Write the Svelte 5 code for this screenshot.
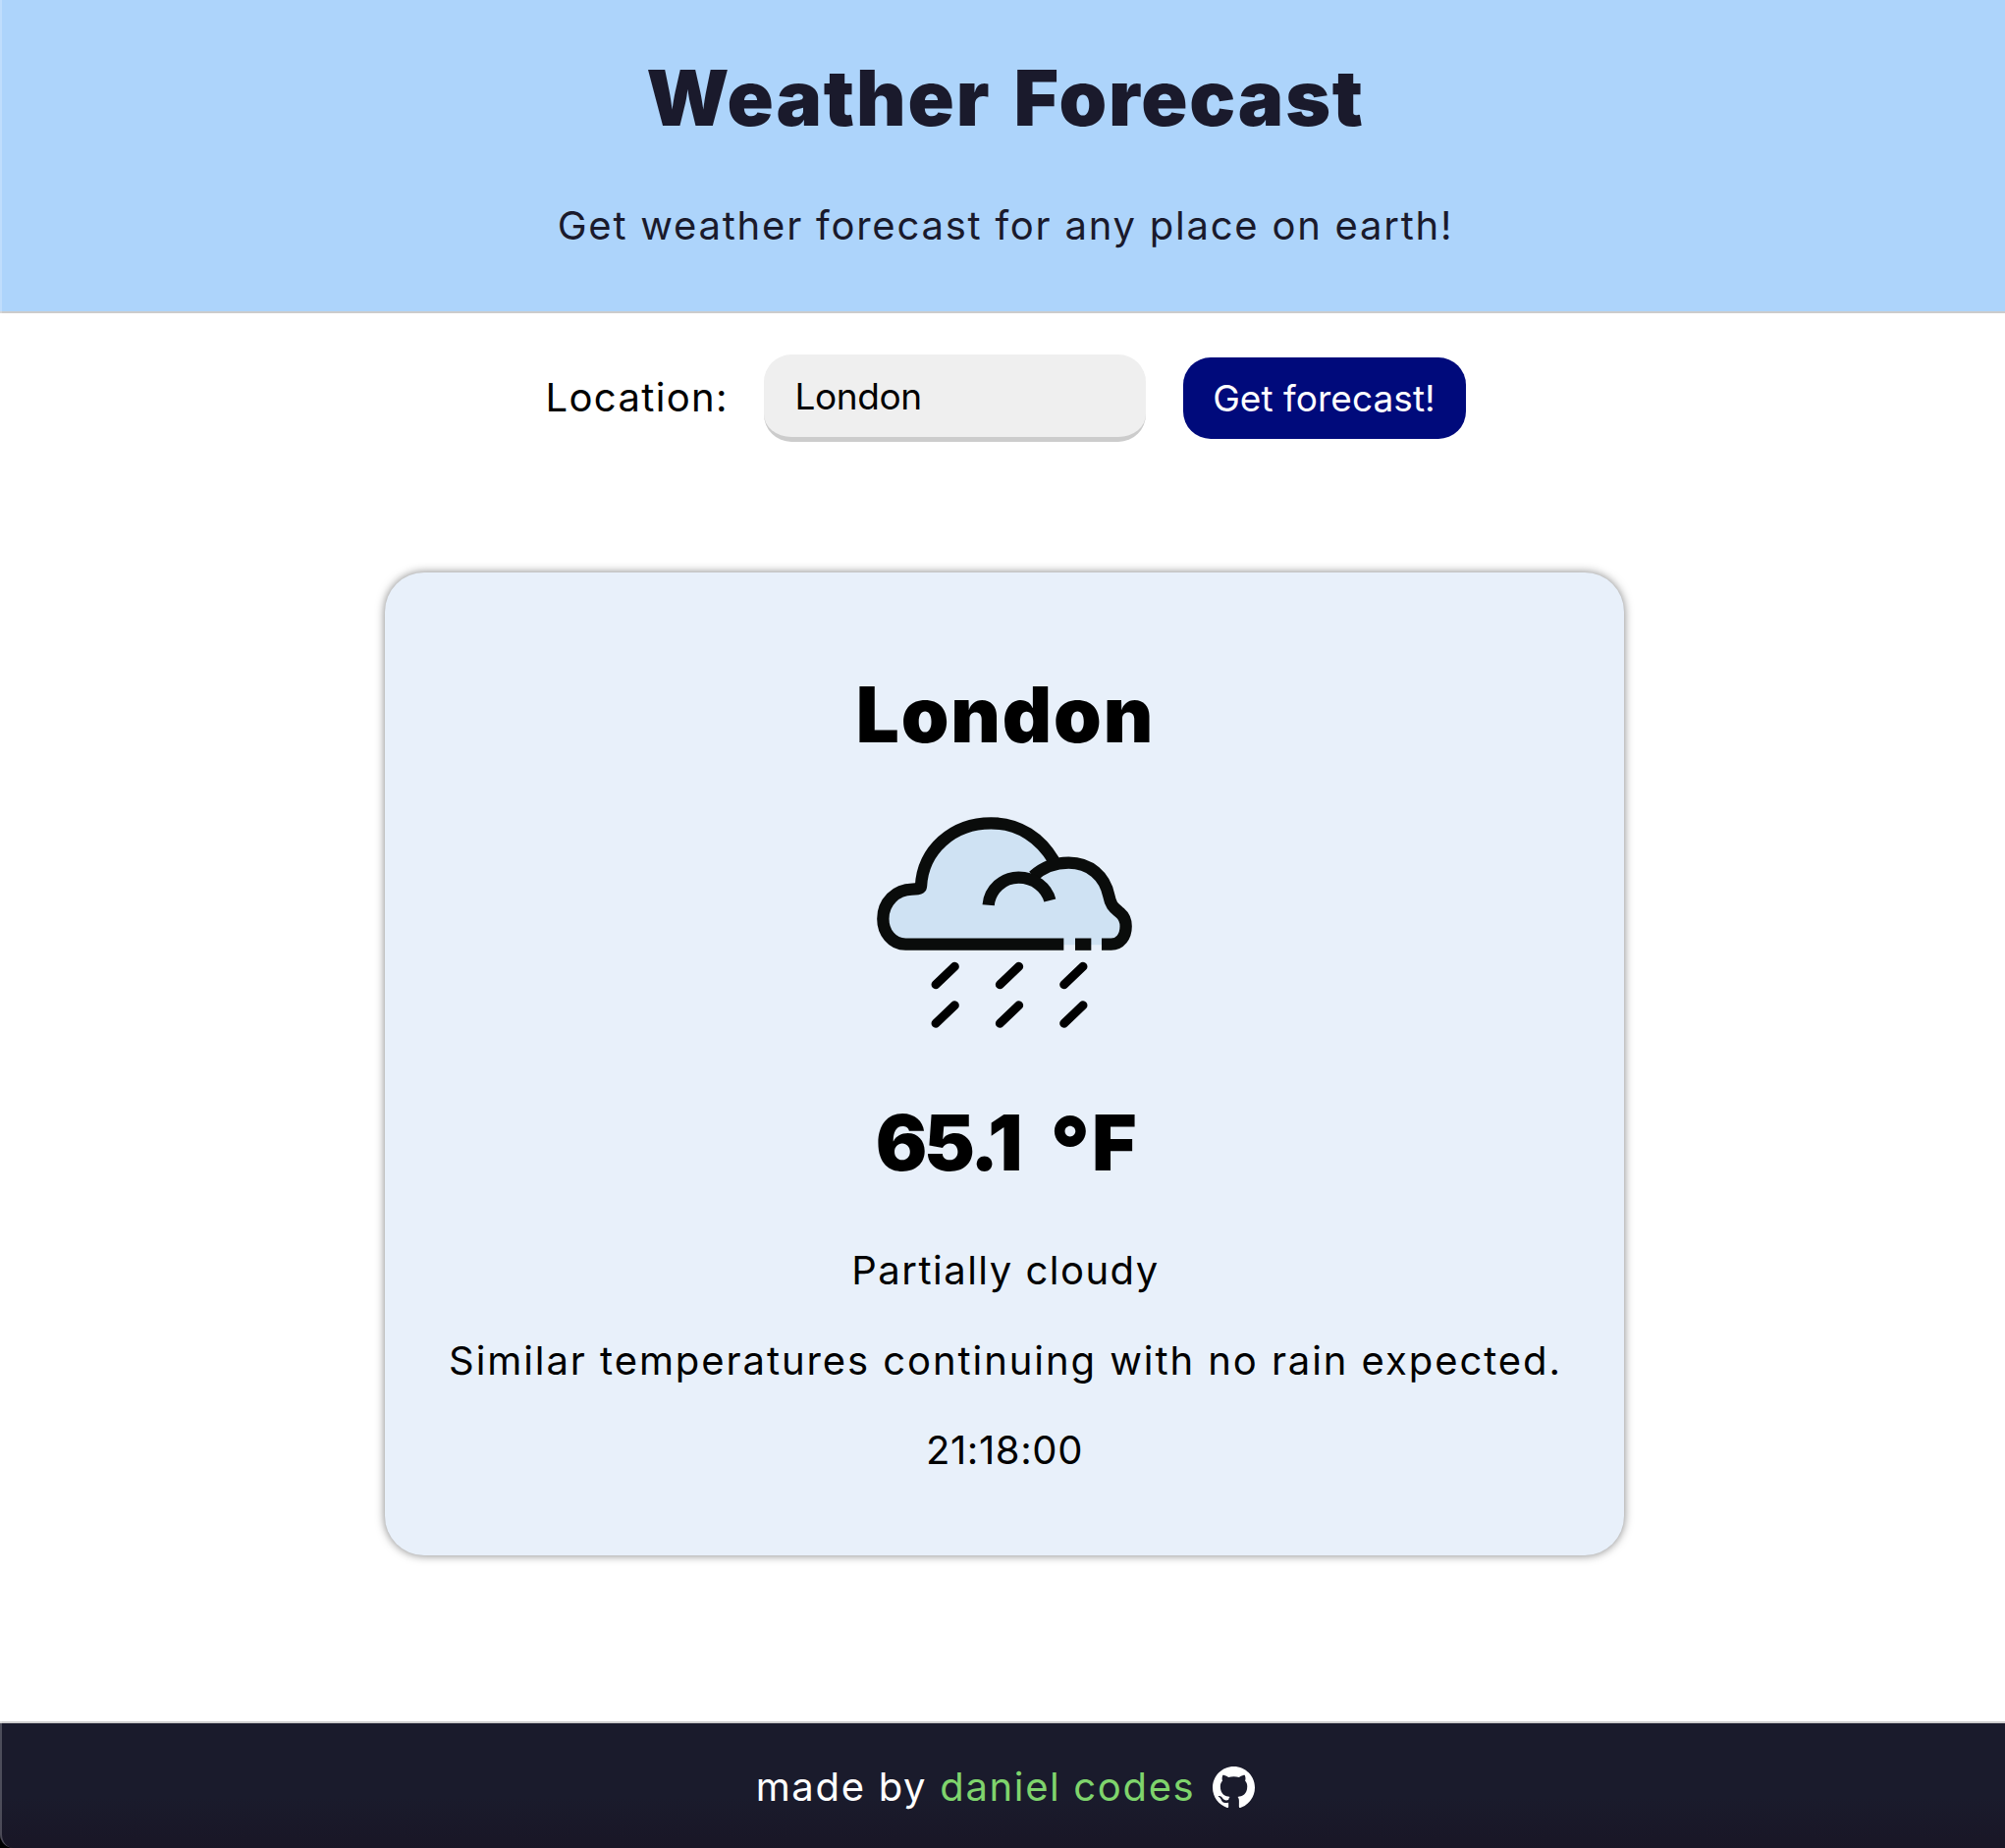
<script lang="ts">
  let location = $state('London');
  const forecast = {
    place: 'London',
    temperature: '65.1',
    conditions: 'Partially cloudy',
    description: 'Similar temperatures continuing with no rain expected.',
    time: '21:18:00'
  };
  const drops = [0, 1, 2].flatMap((col) => [0, 1].map((row) => ({ x: col * 196, y: row * 118.5 })));
</script>

<div class="page">
  <header>
    <h1>Weather Forecast</h1>
    <p>Get weather forecast for any place on earth!</p>
  </header>

  <main>
    <form onsubmit={(e) => e.preventDefault()}>
      <label for="location">Location:</label>
      <input id="location" type="text" bind:value={location} />
      <button type="submit">Get forecast!</button>
    </form>

    <section class="card">
      <h2 class="place">{forecast.place}</h2>
      <svg class="icon" viewBox="-6 0 930 780" aria-hidden="true">
        <path
          class="fill"
          d="M157 460C115 460 88 420 88 380C88 330 125 290 175 290Q205 290 205 275C212 170 300 88 418 88C505 88 570 135 608 209C720 200 770 250 780 315C786 345 795 347 812 362C825 373 830 388 830 403C830 435 812 460 785 460Z"
        />
        <g class="outline">
          <path d="M640 458H157C115 458 88 421 88 380C88 330 127 290 177 290Q204 290 204 280C210 170 300 88 418 88C505 88 570 135 610 203" />
          <path d="M547 250C575 224 610 209 655 209C720 209 766 250 778 310C784 342 795 347 812 362C825 373 830 388 830 403C830 435 812 458 785 458H756" />
          <path d="M410 338C414 290 455 254 502 254C550 254 588 285 598 324" />
          <path d="M675 458H724" />
        </g>
        <g class="rain">
          {#each drops as d}
            <path d="M249 581L307 526" transform="translate({d.x} {d.y})" />
          {/each}
        </g>
      </svg>
      <h2 class="temp">{forecast.temperature} <span class="degree">°</span>F</h2>
      <p class="conditions">{forecast.conditions}</p>
      <p class="description">{forecast.description}</p>
      <p class="time">{forecast.time}</p>
    </section>
  </main>

  <footer>
    <span class="made">made by</span>
    <a href="#daniel">daniel codes</a>
    <svg class="github" viewBox="0 0 16 16" aria-hidden="true">
      <path d="M8 0C3.58 0 0 3.58 0 8c0 3.54 2.29 6.53 5.47 7.59.4.07.55-.17.55-.38 0-.19-.01-.82-.01-1.49-2.01.37-2.53-.49-2.69-.94-.09-.23-.48-.94-.82-1.13-.28-.15-.68-.52-.01-.53.63-.01 1.08.58 1.23.82.72 1.21 1.87.87 2.33.66.07-.52.28-.87.51-1.07-1.78-.2-3.64-.89-3.64-3.95 0-.87.31-1.59.82-2.15-.08-.2-.36-1.02.08-2.12 0 0 .67-.21 2.2.82.64-.18 1.32-.27 2-.27s1.36.09 2 .27c1.53-1.04 2.2-.82 2.2-.82.44 1.1.16 1.92.08 2.12.51.56.82 1.27.82 2.15 0 3.07-1.87 3.75-3.65 3.95.29.25.54.73.54 1.48 0 1.07-.01 1.93-.01 2.2 0 .21.15.46.55.38A8.01 8.01 0 0 0 16 8c0-4.42-3.58-8-8-8z" />
    </svg>
  </footer>
  <div class="edge"></div>
</div>

<style>
  :global(body) {
    background: #fff;
  }
  .page {
    position: relative;
    box-sizing: border-box;
    height: 1882px;
    display: flex;
    flex-direction: column;
    overflow: hidden;
    font-family: Inter, 'Liberation Sans', sans-serif;
    font-size: 40px;
    line-height: 50px;
    color: #000;
  }
  h1,
  h2,
  p {
    margin: 0;
    white-space: nowrap;
  }
  h1,
  h2 {
    font-size: 78px;
    font-weight: 900;
    line-height: 100px;
  }
  header {
    box-sizing: border-box;
    height: 319px;
    padding: 50px 0 0 4px;
    display: flex;
    flex-direction: column;
    align-items: center;
    gap: 55px;
    background: #add4fb;
    border-bottom: 2px solid #ccc;
    color: #1a1a2c;
  }
  h1 {
    padding-left: 2px;
    letter-spacing: 1.8px;
    word-spacing: 6px;
  }
  header p {
    padding-left: 2px;
    letter-spacing: 1.77px;
  }
  main {
    flex: 1;
    padding-left: 4px;
    display: flex;
    flex-direction: column;
    align-items: center;
  }
  form {
    margin-top: 42px;
    height: 89px;
    display: flex;
    align-items: center;
    gap: 38px;
    padding-left: 2px;
  }
  label {
    width: 184px;
    margin-top: -2px;
    white-space: nowrap;
    letter-spacing: 1.35px;
  }
  input,
  button {
    box-sizing: border-box;
    border: 0;
    border-radius: 28px;
    font-family: inherit;
    font-size: 37px;
    line-height: 48px;
  }
  input {
    width: 389px;
    height: 89px;
    padding: 0 32px;
    background: #efefef;
    border-bottom: 5px solid #ccc;
    outline: none;
    color: #000;
    letter-spacing: -0.4px;
  }
  button {
    width: 288px;
    height: 83px;
    padding: 0;
    background: #000a7b;
    color: #fff;
    white-space: nowrap;
    letter-spacing: 0.05px;
  }
  .card {
    box-sizing: border-box;
    width: 1262px;
    height: 1001px;
    margin-top: 133px;
    padding-top: 95px;
    display: flex;
    flex-direction: column;
    align-items: center;
    background: #e8f0fa;
    border-radius: 40px;
    box-shadow: 0 0 10px rgba(0, 0, 0, 0.5);
  }
  .place {
    padding-left: 2px;
    letter-spacing: 1.9px;
  }
  .icon {
    width: 310px;
    height: 260px;
    margin-top: 31px;
  }
  .fill {
    fill: #cfe2f3;
  }
  .outline {
    fill: none;
    stroke: #0a0c0b;
    stroke-width: 37;
  }
  .rain {
    stroke: #000;
    stroke-width: 27;
    stroke-linecap: round;
  }
  .temp {
    margin-top: 45px;
    letter-spacing: -3.4px;
    word-spacing: 19px;
  }
  .degree {
    font-size: 88px;
    line-height: 0;
    letter-spacing: 2px;
    vertical-align: -8px;
  }
  .conditions {
    margin-top: 55px;
    padding-left: 2px;
    letter-spacing: 1.5px;
  }
  .description,
  .time {
    margin-top: 41.5px;
  }
  .description {
    padding-left: 2px;
    letter-spacing: 1.93px;
  }
  .time {
    letter-spacing: 0.6px;
  }
  footer {
    box-sizing: border-box;
    height: 129px;
    padding: 3px 0 0 6px;
    display: flex;
    justify-content: center;
    align-items: center;
    background: linear-gradient(#1a1b2c 60%, #191626);
    border-top: 2px solid #ccc;
    color: #fff;
  }
  .made {
    margin-right: 13px;
    letter-spacing: 1.7px;
  }
  a {
    color: #7fd46c;
    text-decoration: none;
    letter-spacing: 1.65px;
  }
  .github {
    width: 43px;
    height: 43px;
    margin-left: 18px;
    fill: #fff;
  }
  /* Thin highlight along the window's left border. */
  .edge {
    position: absolute;
    left: 0;
    top: 0;
    bottom: 0;
    width: 30px;
    border-left: 2px solid rgba(255, 255, 255, 0.22);
    border-bottom-left-radius: 14px;
    box-shadow: -8px 8px 0 #000;
    clip-path: inset(0);
    box-sizing: border-box;
    pointer-events: none;
  }
</style>
